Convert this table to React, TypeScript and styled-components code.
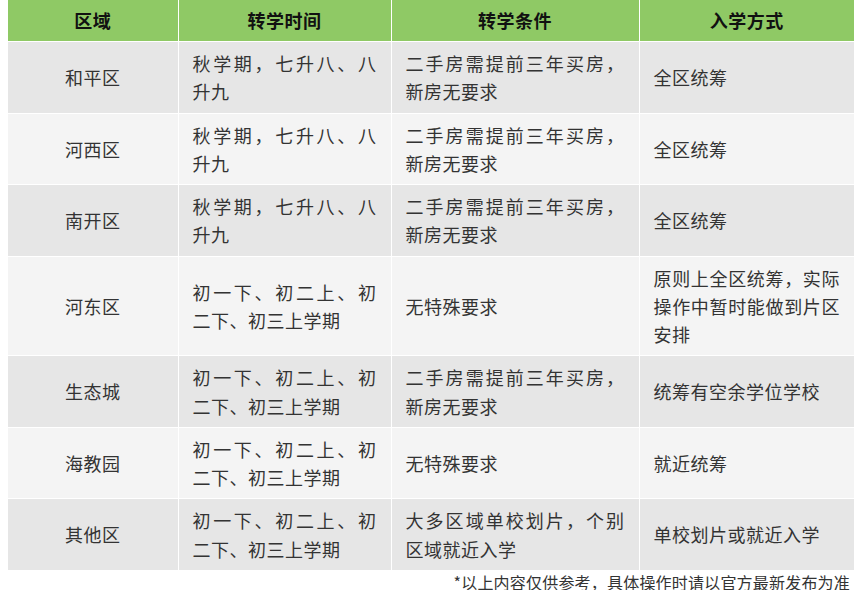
import styled, { createGlobalStyle } from "styled-components";

type Row = {
  district: string;
  period: string;
  condition: string;
  admission: string;
};

const rows: Row[] = [
  {
    district: "和平区",
    period: "秋学期，七升八、八升九",
    condition: "二手房需提前三年买房，新房无要求",
    admission: "全区统筹",
  },
  {
    district: "河西区",
    period: "秋学期，七升八、八升九",
    condition: "二手房需提前三年买房，新房无要求",
    admission: "全区统筹",
  },
  {
    district: "南开区",
    period: "秋学期，七升八、八升九",
    condition: "二手房需提前三年买房，新房无要求",
    admission: "全区统筹",
  },
  {
    district: "河东区",
    period: "初一下、初二上、初二下、初三上学期",
    condition: "无特殊要求",
    admission: "原则上全区统筹，实际操作中暂时能做到片区安排",
  },
  {
    district: "生态城",
    period: "初一下、初二上、初二下、初三上学期",
    condition: "二手房需提前三年买房，新房无要求",
    admission: "统筹有空余学位学校",
  },
  {
    district: "海教园",
    period: "初一下、初二上、初二下、初三上学期",
    condition: "无特殊要求",
    admission: "就近统筹",
  },
  {
    district: "其他区",
    period: "初一下、初二上、初二下、初三上学期",
    condition: "大多区域单校划片，个别区域就近入学",
    admission: "单校划片或就近入学",
  },
];

const columns = [
  { title: "区域", width: 170 },
  { title: "转学时间", width: 213 },
  { title: "转学条件", width: 248 },
  { title: "入学方式", width: 215 },
];

const App = () => {
  return (
    <>
      <GlobalStyle />
      <Page>
        <Table>
          <colgroup>
            {columns.map((col) => (
              <col key={col.title} style={{ width: col.width }} />
            ))}
          </colgroup>
          <thead>
            <tr>
              {columns.map((col) => (
                <HeadCell key={col.title}>{col.title}</HeadCell>
              ))}
            </tr>
          </thead>
          <tbody>
            {rows.map((row, i) => (
              <BodyRow key={row.district} $shaded={i % 2 === 0}>
                <DistrictCell>{row.district}</DistrictCell>
                <Cell>{row.period}</Cell>
                <Cell>{row.condition}</Cell>
                <Cell>{row.admission}</Cell>
              </BodyRow>
            ))}
          </tbody>
        </Table>
        <Note>*以上内容仅供参考，具体操作时请以官方最新发布为准</Note>
      </Page>
    </>
  );
};

const GlobalStyle = createGlobalStyle`
  html, body {
    margin: 0;
    padding: 0;
    background: #ffffff;
  }
  body {
    font-family: "Noto Sans CJK SC", "Noto Sans", sans-serif;
    color: #333333;
  }
`;

const Page = styled.div`
  width: 846px;
  padding-left: 8px;
  display: flex;
  flex-direction: column;
`;

const Table = styled.table`
  width: 846px;
  table-layout: fixed;
  border-collapse: collapse;
  font-size: 18px;
  letter-spacing: 0.5px;
  line-height: 28.25px;
`;

const HeadCell = styled.th`
  height: 41px;
  padding: 0 14px;
  background: #8fc965;
  color: #111111;
  font-weight: 700;
  text-align: center;
  border: 1px solid #ffffff;
  border-top: 0;
  border-left: 0;
  &:last-child {
    border-right: 0;
  }
`;

const BodyRow = styled.tr<{ $shaded: boolean }>`
  background: ${({ $shaded }) => ($shaded ? "#e6e6e6" : "#f4f4f4")};
`;

const Cell = styled.td`
  padding: 7px 14px;
  text-align: justify;
  vertical-align: middle;
  border: 1px solid #ffffff;
  &:last-child {
    border-right: 0;
  }
`;

const DistrictCell = styled(Cell)`
  text-align: center;
  border-left: 0;
`;

const Note = styled.div`
  align-self: flex-end;
  margin-right: 4px;
  font-size: 16px;
  letter-spacing: 0.2px;
  line-height: 20px;
  padding-top: 1px;
  color: #333333;
  white-space: nowrap;
`;

export default App;
